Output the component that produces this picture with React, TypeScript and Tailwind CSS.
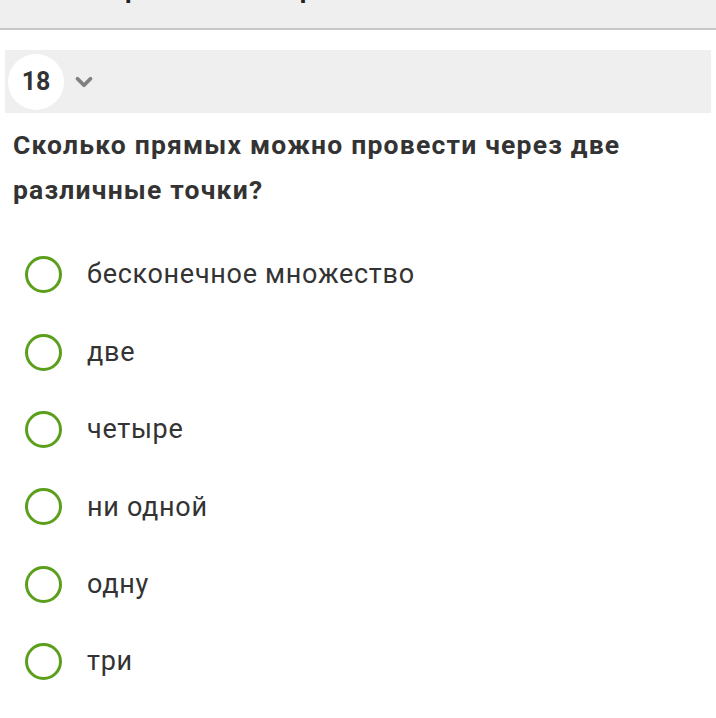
import { ChevronDown } from "lucide-react"

const options = ["бесконечное множество", "две", "четыре", "ни одной", "одну", "три"]

function RadioOption({ label }: { label: string }) {
  return (
    <label className="flex h-[77.4px] items-center">
      <span className="ml-[25px] h-[37px] w-[37px] shrink-0 rounded-full border-[3.5px] border-[#5b9f1c] bg-white" />
      <span className="ml-[25px] text-[27px] tracking-[0.7px] text-[#333]">{label}</span>
    </label>
  )
}

export default function App() {
  return (
    <div className="h-[718px] w-[716px] overflow-hidden bg-white font-['Roboto',sans-serif]">
      <div className="h-[30px] overflow-hidden border-b-2 border-[#c8c8c8] bg-[#efefef]">
        <div className="-mt-[28px] flex text-[26px] font-bold leading-[34px] text-[#222]">
          <span className="ml-[125px]">р</span>
          <span className="ml-[160px]">р</span>
        </div>
      </div>

      <div className="mx-[5px] mt-[20px] flex h-[63px] items-center bg-[#efefef]">
        <div className="ml-[3px] flex h-[56px] w-[56px] items-center justify-center rounded-full bg-white text-[25px] font-bold text-[#333]">
          18
        </div>
        <ChevronDown className="ml-[7px] h-[26px] w-[26px] text-[#808080]" strokeWidth={3.5} />
      </div>

      <h2 className="mt-[9px] px-[13px] text-[26.5px] font-bold leading-[45px] tracking-[1.2px] text-[#333]">
        Сколько прямых можно провести через две различные точки?
      </h2>

      <div className="mt-[24px] flex flex-col">
        {options.map((o) => (
          <RadioOption key={o} label={o} />
        ))}
      </div>
    </div>
  )
}
